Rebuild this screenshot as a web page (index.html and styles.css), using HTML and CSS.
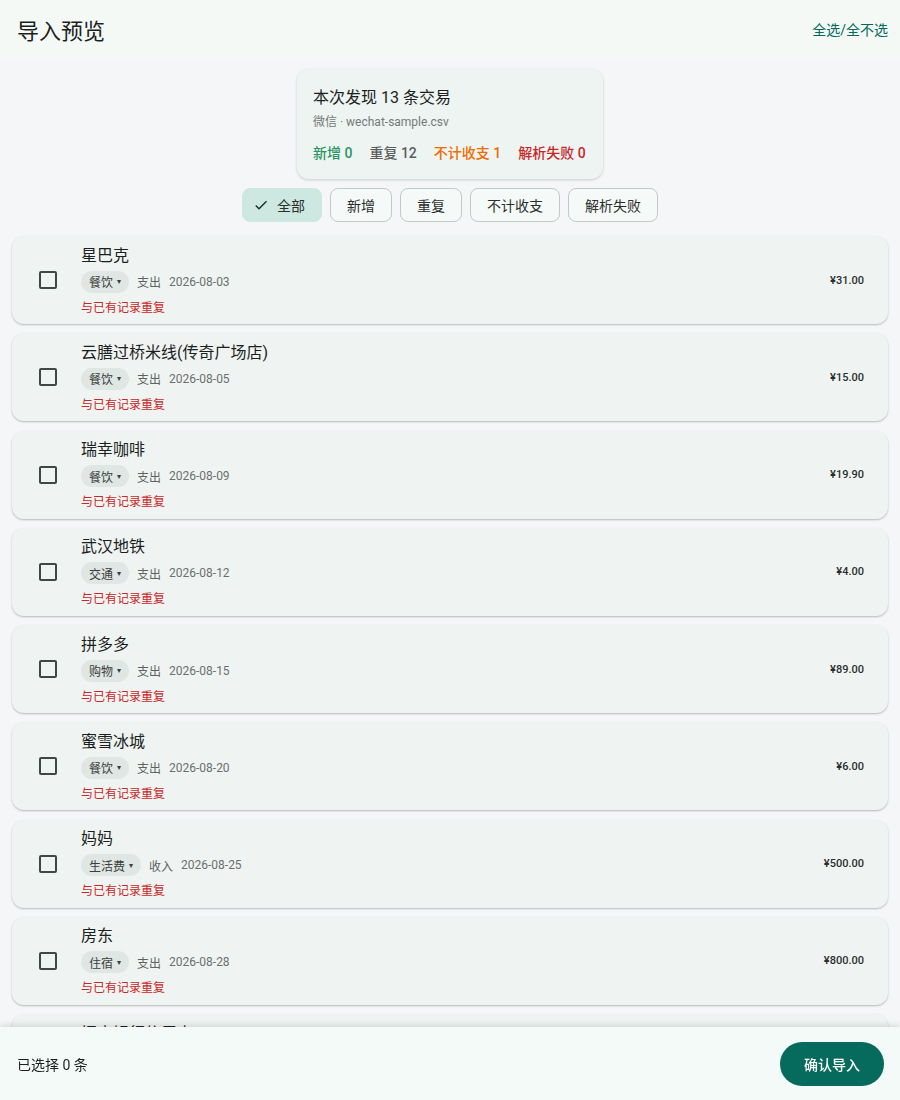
FILE: index.html
```html
<!DOCTYPE html>
<html lang="zh-CN">
<head>
<meta charset="utf-8">
<title>导入预览</title>
<link rel="stylesheet" href="styles.css">
</head>
<body>
<header class="topbar">
  <h1 class="title">导入预览</h1>
  <a class="toggle-all">全选/全不选</a>
</header>
<main class="content">
  <section class="summary">
    <div class="summary-title">本次发现 13 条交易</div>
    <div class="summary-sub">微信 · wechat-sample.csv</div>
    <div class="stats">
      <span class="stat new">新增 0</span>
      <span class="stat dup">重复 12</span>
      <span class="stat skip">不计收支 1</span>
      <span class="stat fail">解析失败 0</span>
    </div>
  </section>
  <div class="filters">
    <button class="chip selected"><svg class="check" viewBox="0 0 24 24" width="16" height="16"><path d="M9 16.2 4.8 12l-1.4 1.4L9 19 21 7l-1.4-1.4z" fill="currentColor"/></svg>全部</button>
    <button class="chip">新增</button>
    <button class="chip">重复</button>
    <button class="chip">不计收支</button>
    <button class="chip">解析失败</button>
  </div>
  <ul class="list">
    <li class="item"><span class="box"></span><div class="info"><div class="name">星巴克</div><div class="meta"><span class="cat">餐饮<i class="caret">▾</i></span><span class="type">支出</span><span class="date">2026-08-03</span></div><div class="warn">与已有记录重复</div></div><div class="amount">¥31.00</div></li>
    <li class="item"><span class="box"></span><div class="info"><div class="name">云膳过桥米线(传奇广场店)</div><div class="meta"><span class="cat">餐饮<i class="caret">▾</i></span><span class="type">支出</span><span class="date">2026-08-05</span></div><div class="warn">与已有记录重复</div></div><div class="amount">¥15.00</div></li>
    <li class="item"><span class="box"></span><div class="info"><div class="name">瑞幸咖啡</div><div class="meta"><span class="cat">餐饮<i class="caret">▾</i></span><span class="type">支出</span><span class="date">2026-08-09</span></div><div class="warn">与已有记录重复</div></div><div class="amount">¥19.90</div></li>
    <li class="item"><span class="box"></span><div class="info"><div class="name">武汉地铁</div><div class="meta"><span class="cat">交通<i class="caret">▾</i></span><span class="type">支出</span><span class="date">2026-08-12</span></div><div class="warn">与已有记录重复</div></div><div class="amount">¥4.00</div></li>
    <li class="item"><span class="box"></span><div class="info"><div class="name">拼多多</div><div class="meta"><span class="cat">购物<i class="caret">▾</i></span><span class="type">支出</span><span class="date">2026-08-15</span></div><div class="warn">与已有记录重复</div></div><div class="amount">¥89.00</div></li>
    <li class="item"><span class="box"></span><div class="info"><div class="name">蜜雪冰城</div><div class="meta"><span class="cat">餐饮<i class="caret">▾</i></span><span class="type">支出</span><span class="date">2026-08-20</span></div><div class="warn">与已有记录重复</div></div><div class="amount">¥6.00</div></li>
    <li class="item"><span class="box"></span><div class="info"><div class="name">妈妈</div><div class="meta"><span class="cat">生活费<i class="caret">▾</i></span><span class="type">收入</span><span class="date">2026-08-25</span></div><div class="warn">与已有记录重复</div></div><div class="amount">¥500.00</div></li>
    <li class="item"><span class="box"></span><div class="info"><div class="name">房东</div><div class="meta"><span class="cat">住宿<i class="caret">▾</i></span><span class="type">支出</span><span class="date">2026-08-28</span></div><div class="warn">与已有记录重复</div></div><div class="amount">¥800.00</div></li>
    <li class="item"><span class="box"></span><div class="info"><div class="name">招商银行信用卡</div><div class="meta"><span class="cat">其他<i class="caret">▾</i></span><span class="type">支出</span><span class="date">2026-08-30</span></div><div class="warn">不计收支</div></div><div class="amount">¥0.00</div></li>
  </ul>
</main>
<footer class="bottombar">
  <span class="selected-count">已选择 0 条</span>
  <button class="confirm">确认导入</button>
</footer>
</body>
</html>
```
FILE: styles.css
```css
* { box-sizing: border-box; }
html, body { margin: 0; padding: 0; }
body {
  font-family: Roboto, "Noto Sans CJK SC", sans-serif;
  background: #f5f6f8;
  color: #1c1f1e;
  width: 900px;
}
.topbar {
  height: 58px;
  background: #f4f9f6;
  display: flex;
  align-items: center;
  justify-content: space-between;
  padding: 0 12px 0 17px;
}
.title {
  margin: 0;
  font-size: 22px;
  font-weight: 400;
  color: #1c1f1e;
}
.toggle-all {
  font-size: 14px;
  color: #00695c;
  cursor: pointer;
}
.content {
  padding: 11px 12px 90px;
  display: flex;
  flex-direction: column;
  align-items: center;
}
.summary {
  width: 306px;
  background: #eef4f2;
  border-radius: 12px;
  box-shadow: 0 1px 3px rgba(0,0,0,0.18);
  padding: 18px 16px 16px;
}
.summary-title {
  font-size: 16px;
  line-height: 22px;
  color: #1c1f1e;
}
.summary-sub {
  margin-top: 4px;
  font-size: 12px;
  line-height: 18px;
  color: #757a78;
}
.stats {
  margin-top: 12px;
  display: flex;
  gap: 17px;
  font-size: 14px;
  line-height: 20px;
  font-weight: 500;
}
.stat.new { color: #2a9563; }
.stat.dup { color: #5a5d5c; }
.stat.skip { color: #ef6c00; }
.stat.fail { color: #c62828; }
.filters {
  margin-top: 9px;
  display: flex;
  gap: 8px;
}
.chip {
  height: 34px;
  padding: 0 16px;
  border: 1px solid #c2c9c6;
  border-radius: 8px;
  background: #f5faf8;
  font-family: inherit;
  font-size: 14px;
  color: #2a2e2d;
  display: flex;
  align-items: center;
  gap: 8px;
}
.chip.selected {
  background: #cde8e1;
  border-color: #cde8e1;
  padding: 0 16px 0 10px;
}
.check { color: #1c2b27; }
.list {
  list-style: none;
  margin: 14px 0 0;
  padding: 0;
  width: 876px;
  display: flex;
  flex-direction: column;
  gap: 9.25px;
}
.item {
  height: 88px;
  background: #eff4f2;
  border-radius: 12px;
  box-shadow: 0 1px 2px rgba(0,0,0,0.25);
  display: flex;
  align-items: center;
  padding: 0 24px 0 27px;
}
.box {
  width: 18px;
  height: 18px;
  border: 2px solid #3d4845;
  border-radius: 2px;
  flex: none;
}
.info {
  flex: 1;
  margin-left: 24px;
  display: flex;
  flex-direction: column;
}
.name {
  font-size: 16px;
  line-height: 22px;
  color: #1c1f1e;
}
.meta {
  margin-top: 4px;
  display: flex;
  align-items: center;
  font-size: 12px;
  color: #5e6361;
}
.cat {
  height: 22px;
  padding: 0 8px;
  border-radius: 11px;
  background: #dfe6e3;
  color: #3a3f3d;
  display: flex;
  align-items: center;
  margin-right: 8px;
}
.caret {
  font-style: normal;
  font-size: 8px;
  margin-left: 4px;
}
.type { margin-right: 8px; }
.date { color: #6b706e; }
.warn {
  margin-top: 7px;
  font-size: 12px;
  line-height: 16px;
  color: #c62828;
}
.amount {
  font-size: 11px;
  font-weight: 500;
  color: #2a2e2d;
}
.bottombar {
  position: fixed;
  left: 0;
  right: 0;
  bottom: 0;
  height: 73px;
  background: #f4faf7;
  box-shadow: 0 -2px 6px rgba(0,0,0,0.12);
  display: flex;
  align-items: center;
  justify-content: space-between;
  padding: 0 16px 0 17px;
}
.selected-count {
  font-size: 14px;
  color: #1c1f1e;
}
.confirm {
  height: 44px;
  width: 104px;
  border: none;
  border-radius: 22px;
  background: #066b5c;
  color: #ffffff;
  font-family: inherit;
  font-size: 14px;
  font-weight: 500;
}
```
